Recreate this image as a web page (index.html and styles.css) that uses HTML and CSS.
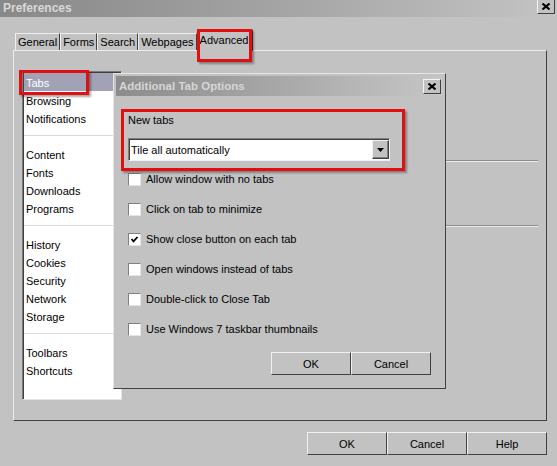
FILE: index.html
```html
<!DOCTYPE html>
<html>
<head>
<meta charset="utf-8">
<title>Preferences</title>
<link rel="stylesheet" href="styles.css">
</head>
<body>
<div class="window">
  <div class="titlebar">
    <span class="title">Preferences</span>
    <span class="xbtn"><svg width="8" height="7" viewBox="0 0 8 7"><path d="M0.5 0.5 L7.5 6.5 M7.5 0.5 L0.5 6.5" stroke="#000" stroke-width="2"/></svg></span>
  </div>
  <div class="tabs">
    <div class="tab">General</div>
    <div class="tab">Forms</div>
    <div class="tab">Search</div>
    <div class="tab">Webpages</div>
    <div class="tab active">Advanced</div>
  </div>
  <div class="panel">
    <div class="list">
      <div class="item selected">Tabs</div>
      <div class="item">Browsing</div>
      <div class="item">Notifications</div>
      <div class="lsep"></div>
      <div class="item">Content</div>
      <div class="item">Fonts</div>
      <div class="item">Downloads</div>
      <div class="item">Programs</div>
      <div class="lsep"></div>
      <div class="item">History</div>
      <div class="item">Cookies</div>
      <div class="item">Security</div>
      <div class="item">Network</div>
      <div class="item">Storage</div>
      <div class="lsep"></div>
      <div class="item">Toolbars</div>
      <div class="item">Shortcuts</div>
    </div>
    <div class="pane">
      <div class="psep first"></div>
      <div class="psep second"></div>
    </div>
  </div>
  <div class="actions">
    <div class="btn">OK</div>
    <div class="btn">Cancel</div>
    <div class="btn">Help</div>
  </div>

  <div class="dialog">
    <div class="dtitle">
      <span>Additional Tab Options</span>
      <span class="xbtn dx"><svg width="8" height="7" viewBox="0 0 8 7"><path d="M0.5 0.5 L7.5 6.5 M7.5 0.5 L0.5 6.5" stroke="#000" stroke-width="2"/></svg></span>
    </div>
    <div class="dbody">
      <div class="glabel">New tabs</div>
      <div class="select">
        <span class="seltext">Tile all automatically</span>
        <span class="arrow"><svg width="7" height="4" viewBox="0 0 7 4"><polygon points="0,0 7,0 3.5,4" fill="#000"/></svg></span>
      </div>
      <div class="opts">
        <div class="opt"><span class="cb"></span><span>Allow window with no tabs</span></div>
        <div class="opt"><span class="cb"></span><span>Click on tab to minimize</span></div>
        <div class="opt"><span class="cb"><svg width="9" height="9" viewBox="0 0 9 9"><polyline points="1.5,4 3.5,6.3 7.5,2" fill="none" stroke="#000" stroke-width="1.8"/></svg></span><span>Show close button on each tab</span></div>
        <div class="opt"><span class="cb"></span><span>Open windows instead of tabs</span></div>
        <div class="opt"><span class="cb"></span><span>Double-click to Close Tab</span></div>
        <div class="opt"><span class="cb"></span><span>Use Windows 7 taskbar thumbnails</span></div>
      </div>
      <div class="dactions">
        <div class="btn">OK</div>
        <div class="btn">Cancel</div>
      </div>
    </div>
  </div>

  <div class="mark mark-adv"></div>
  <div class="mark mark-tabs"></div>
  <div class="mark mark-new"></div>
</div>
</body>
</html>
```

FILE: styles.css
```css
html, body {
  margin: 0;
  padding: 0;
}
body {
  background: #c2c2c2;
  font-family: "Liberation Sans", Arial, sans-serif;
  font-size: 11px;
  color: #000;
}
.window {
  position: relative;
  width: 557px;
  height: 466px;
  overflow: hidden;
}
.titlebar {
  height: 17px;
  display: flex;
  justify-content: space-between;
  align-items: flex-start;
  background: linear-gradient(to right, #888888 0%, #a4a4a4 50%, #c4c4c4 100%);
  padding-left: 3px;
}
.title {
  font-weight: bold;
  font-size: 12px;
  line-height: 16px;
  color: #d8d8d8;
}
.xbtn {
  width: 18px;
  height: 15px;
  box-sizing: border-box;
  border: 1px solid;
  border-color: #f4f4f4 #404040 #404040 #f4f4f4;
  background: #c2c2c2;
  display: flex;
  align-items: center;
  justify-content: center;
  margin-right: 2px;
}
.titlebar .xbtn {
  margin-top: -1px;
}
.tabs {
  height: 33px;
  display: flex;
  align-items: flex-end;
  padding-left: 15px;
}
.tab {
  height: 17px;
  box-sizing: border-box;
  padding: 0 2px;
  border-top: 1px solid #eeeeee;
  border-left: 1px solid #eeeeee;
  border-right: 1px solid #404040;
  display: flex;
  align-items: center;
  line-height: 13px;
}
.tab.active {
  padding: 4px 3px 0 2px;
  align-items: flex-start;
  position: relative;
  z-index: 1;
  background: #c2c2c2;
  margin-bottom: -1px;
  height: 22px;
}
.panel {
  margin-left: 13px;
  width: 534px;
  height: 371px;
  box-sizing: border-box;
  border: 1px solid;
  border-color: #ececec #404040 #404040 #ececec;
  display: flex;
  padding: 20px 0 0 8px;
}
.list {
  width: 100px;
  height: 329px;
  box-sizing: border-box;
  background: #fff;
  border: 1px solid;
  border-color: #7a7a7a #e4e4e4 #e4e4e4 #7a7a7a;
  box-shadow: inset 1px 1px 0 #404040;
  padding: 1px 0 0 1px;
}
.item {
  height: 18px;
  line-height: 20px;
  padding-left: 2px;
  white-space: nowrap;
  overflow: hidden;
}
.item.selected {
  background: #a2a2b6;
  color: #fff;
}
.lsep {
  height: 1px;
  background: #dadada;
  margin: 8px 0 9px 0;
}
.pane {
  flex: 1;
  margin: 0 8px 0 8px;
}
.psep {
  height: 0;
  border-top: 1px solid #8c8c8c;
  border-bottom: 1px solid #ececec;
}
.psep.first {
  margin-top: 89px;
}
.psep.second {
  margin-top: 63px;
}
.actions {
  display: flex;
  justify-content: flex-end;
  margin: 11px 10px 0 0;
}
.btn {
  width: 80px;
  height: 23px;
  box-sizing: border-box;
  border: 1px solid;
  border-color: #f0f0f0 #404040 #404040 #f0f0f0;
  background: #c2c2c2;
  display: flex;
  align-items: center;
  justify-content: center;
}
.dialog {
  position: absolute;
  left: 113px;
  top: 73px;
  width: 333px;
  height: 316px;
  box-sizing: border-box;
  border: 1px solid;
  border-color: #e6e6e6 #404040 #404040 #e6e6e6;
  padding: 2px;
  background: #c2c2c2;
  display: flex;
  flex-direction: column;
  z-index: 2;
}
.dtitle {
  height: 20px;
  display: flex;
  align-items: center;
  justify-content: space-between;
  padding-left: 3px;
  background: linear-gradient(to right, #8c8c8c 0%, #a8a8a8 50%, #c6c6c6 100%);
  font-weight: bold;
  font-size: 11.5px;
  color: #d6d6d6;
}
.dbody {
  padding: 0 12px;
  display: flex;
  flex-direction: column;
}
.glabel {
  margin-top: 17px;
  line-height: 14px;
}
.select {
  margin-top: 11px;
  width: 262px;
  height: 23px;
  box-sizing: border-box;
  border: 1px solid;
  border-color: #808080 #f0f0f0 #f0f0f0 #808080;
  box-shadow: inset 1px 1px 0 #404040;
  background: #fff;
  display: flex;
  align-items: center;
  padding: 1px 0 1px 2px;
}
.seltext {
  flex: 1;
}
.arrow {
  width: 17px;
  height: 19px;
  box-sizing: border-box;
  border: 1px solid;
  border-color: #f0f0f0 #404040 #404040 #f0f0f0;
  box-shadow: inset -1px -1px 0 #808080;
  background: #c2c2c2;
  display: flex;
  align-items: center;
  justify-content: center;
}
.opts {
  margin-top: 3px;
  display: flex;
  flex-direction: column;
}
.opt {
  height: 30px;
  display: flex;
  align-items: center;
  gap: 5px;
}
.cb {
  width: 13px;
  height: 13px;
  box-sizing: border-box;
  border: 1px solid;
  border-color: #808080 #e4e4e4 #e4e4e4 #808080;
  background: #fff;
  display: flex;
  align-items: center;
  justify-content: center;
}
.dactions {
  margin-top: 8px;
  display: flex;
  justify-content: flex-end;
}
.mark {
  position: absolute;
  box-sizing: border-box;
  border: 3px solid #e01010;
  box-shadow: 2px 2px 2px rgba(0, 0, 0, 0.35);
  z-index: 5;
}
.mark-adv {
  left: 197px;
  top: 29px;
  width: 55px;
  height: 33px;
}
.mark-tabs {
  left: 19px;
  top: 70px;
  width: 70px;
  height: 25px;
}
.mark-new {
  left: 121px;
  top: 109px;
  width: 284px;
  height: 62px;
}
```
